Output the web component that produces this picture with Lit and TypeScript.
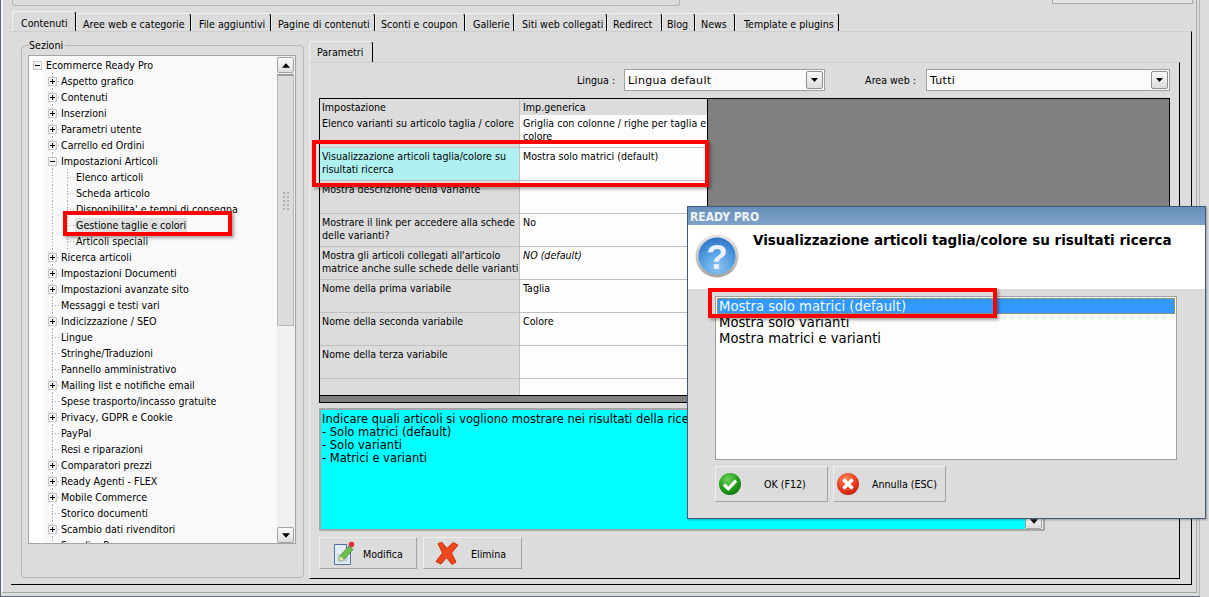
import { LitElement, html, css, svg } from "lit";
import { customElement } from "lit/decorators.js";

type Node = { t: string; l: number; e?: "+" | "-"; hl?: boolean };
const tree: Node[] = [
  { t: "Ecommerce Ready Pro", l: 0, e: "-" },
  { t: "Aspetto grafico", l: 1, e: "+" },
  { t: "Contenuti", l: 1, e: "+" },
  { t: "Inserzioni", l: 1, e: "+" },
  { t: "Parametri utente", l: 1, e: "+" },
  { t: "Carrello ed Ordini", l: 1, e: "+" },
  { t: "Impostazioni Articoli", l: 1, e: "-" },
  { t: "Elenco articoli", l: 2 },
  { t: "Scheda articolo", l: 2 },
  { t: "Disponibilita' e tempi di consegna", l: 2 },
  { t: "Gestione taglie e colori", l: 2, hl: true },
  { t: "Articoli speciali", l: 2 },
  { t: "Ricerca articoli", l: 1, e: "+" },
  { t: "Impostazioni Documenti", l: 1, e: "+" },
  { t: "Impostazioni avanzate sito", l: 1, e: "+" },
  { t: "Messaggi e testi vari", l: 1 },
  { t: "Indicizzazione / SEO", l: 1, e: "+" },
  { t: "Lingue", l: 1 },
  { t: "Stringhe/Traduzioni", l: 1 },
  { t: "Pannello amministrativo", l: 1 },
  { t: "Mailing list e notifiche email", l: 1, e: "+" },
  { t: "Spese trasporto/incasso gratuite", l: 1 },
  { t: "Privacy, GDPR e Cookie", l: 1, e: "+" },
  { t: "PayPal", l: 1 },
  { t: "Resi e riparazioni", l: 1 },
  { t: "Comparatori prezzi", l: 1, e: "+" },
  { t: "Ready Agenti - FLEX", l: 1, e: "+" },
  { t: "Mobile Commerce", l: 1, e: "+" },
  { t: "Storico documenti", l: 1 },
  { t: "Scambio dati rivenditori", l: 1, e: "+" },
  { t: "Supplier Pro", l: 1 },
];

const tabs: [string, number, number][] = [
  ["Contenuti", 64, 8], ["Aree web e categorie", 115, 6], ["File aggiuntivi", 80, 7], ["Pagine di contenuti", 104, 6],
  ["Sconti e coupon", 90, 5], ["Gallerie", 49, 7], ["Siti web collegati", 93, 7], ["Redirect", 55, 5],
  ["Blog", 33, 4], ["News", 40, 5], ["Template e plugins", 104, 8],
];

const rows: [string, string, boolean?, boolean?][] = [
  ["Elenco varianti su articolo taglia / colore", "Griglia con colonne / righe per taglia e colore"],
  ["Visualizzazione articoli taglia/colore su risultati ricerca", "Mostra solo matrici (default)", true],
  ["Mostra descrizione della variante", ""],
  ["Mostrare il link per accedere alla schede delle varianti?", "No"],
  ["Mostra gli articoli collegati all'articolo matrice anche sulle schede delle varianti", "NO (default)", false, true],
  ["Nome della prima variabile", "Taglia"],
  ["Nome della seconda variabile", "Colore"],
  ["Nome della terza variabile", ""],
  ["", ""],
];

const arrowDown = svg`<svg width="8" height="5" viewBox="0 0 9 5"><path d="M0 0h9L4.500 5z" fill="#000"/></svg>`;
const arrowUp = svg`<svg width="8" height="5" viewBox="0 0 9 5"><path d="M0 5h9L4.500 0z" fill="#000"/></svg>`;
const comboArrow = svg`<svg width="7" height="4" viewBox="0 0 7 4"><path d="M0 0h7L3.500 4z" fill="#000"/></svg>`;

const expander = (e: string) => svg`<svg class="exp" width="9" height="9" viewBox="0 0 9 9">
  <rect x=".5" y=".5" width="8" height="8" fill="#f4f4f4" stroke="#c8c8c8"/>
  <path d="M2 4.500h5${e === "+" ? "M4.500 2v5" : ""}" stroke="#000" fill="none"/></svg>`;

const okIcon = svg`<svg width="24" height="24" viewBox="0 0 24 24">
  <defs><radialGradient id="g" cx=".4" cy=".3" r=".8"><stop offset="0" stop-color="#6fd05a"/><stop offset=".6" stop-color="#1f9a1c"/><stop offset="1" stop-color="#0c6a10"/></radialGradient></defs>
  <circle cx="12" cy="12" r="11" fill="url(#g)"/>
  <path d="M6 12.500l4.300 4.300L18 8.600" fill="none" stroke="#fff" stroke-width="3.200"/></svg>`;
const noIcon = svg`<svg width="24" height="24" viewBox="0 0 24 24">
  <defs><radialGradient id="r" cx=".4" cy=".3" r=".8"><stop offset="0" stop-color="#ff8a60"/><stop offset=".6" stop-color="#e8391a"/><stop offset="1" stop-color="#b01e0c"/></radialGradient></defs>
  <circle cx="12" cy="12" r="11" fill="url(#r)"/>
  <path d="M7.500 7.500l9 9M16.500 7.500l-9 9" fill="none" stroke="#fff" stroke-width="3.400"/></svg>`;
const editIcon = svg`<svg width="22" height="24" viewBox="0 0 22 24">
  <path d="M1.500 3.500h12l4 4v16h-16z" fill="#e4ecf6" stroke="#4f6fa5"/>
  <path d="M4 13h11v8H4z" fill="#c8d4e0"/>
  <path d="M13.500 3.500v4h4" fill="#fff" stroke="#4f6fa5"/>
  <path d="M6 20l1-5L16 5l4 3.500L11 18.500z" fill="#6cc04a" stroke="#3e8a2c" stroke-width=".8"/>
  <path d="M6 20l1-5 4 3.500z" fill="#f4e4b0"/>
  <circle cx="18.500" cy="3.500" r="2.800" fill="#e0303a"/></svg>`;
const delIcon = svg`<svg width="24" height="23" viewBox="0 0 24 23">
  <path d="M3 1.500L7 .5l5 6 6-6 5 2.500-6.500 8L21 20l-4 2.500-5.500-7L6 22l-5-2.500 6.500-8.500z" fill="#f0471c" stroke="#c42e0a" stroke-linejoin="round"/></svg>`;
const helpIcon = svg`<svg width="44" height="44" viewBox="0 0 44 44">
  <defs>
    <linearGradient id="ring" x1="0" y1="0" x2="0" y2="1"><stop offset="0" stop-color="#e8e8e8"/><stop offset="1" stop-color="#a4a4a4"/></linearGradient>
    <radialGradient id="orb" cx=".5" cy=".8" r=".85"><stop offset="0" stop-color="#8cc6f5"/><stop offset=".6" stop-color="#4a96e0"/><stop offset="1" stop-color="#2a6cc0"/></radialGradient>
  </defs>
  <circle cx="22" cy="22" r="21.500" fill="url(#ring)"/>
  <circle cx="22" cy="22" r="18.500" fill="url(#orb)"/>
  <text x="22" y="35" text-anchor="middle" font-family="Liberation Sans" font-weight="700" font-size="35" fill="#eef1fa">?</text></svg>`;

@customElement("app-root")
export class AppRoot extends LitElement {
  static styles = css`
    :host { display: block; width: 1209px; height: 597px; overflow: hidden; position: relative; background: #dcdcdc;
      font: 10.600px/13px "DejaVu Sans Condensed", "DejaVu Sans", sans-serif; color: #000; }
    * { box-sizing: border-box; }
    .window { width: 1200px; height: 597px; display: flex; border-left: 1px solid #5f6d7c; border-right: 1px solid #aeb4ba; border-bottom: 1px solid #5f6d7c; }
    .frame { width: 1196px; height: 593px; border-left: 2px solid #f4f4f4; border-right: 1px solid #a9a9a9; border-bottom: 1px solid #a9a9a9; padding-left: 8px; display: flex; flex-direction: column; }
    .top { height: 13px; display: flex; justify-content: space-between; padding-left: 1px; }
    .top-a { width: 668px; height: 6px; border: 1px solid #b4b4b4; border-top: 0; border-radius: 0 0 3px 3px; }
    .top-b { width: 141px; height: 4px; border: 1px solid #a8a8a8; border-top: 0; margin-right: 3px; background: #e4e4e4; }
    .tabs { height: 18px; display: flex; padding-left: 1px; }
    .tab { height: 18px; padding-top: 4px; border-top: 1px solid #efefef; border-left: 1px solid #efefef; border-right: 1px solid #000; border-radius: 3px 3px 0 0; white-space: nowrap; }
    .tab.on { height: 20px; margin-top: -2px; padding-top: 5px; }
    .panel { width: 1181px; height: 554px; border-top: 1px solid #cfcfcf; border-right: 1px solid #000; border-bottom: 1px solid #000; padding-left: 10px; display: flex; gap: 5px; align-items: flex-start; }
    .group { width: 283px; height: 533px; margin-top: 13px; border: 1px solid #b6b6b6; border-radius: 4px; padding: 0 7px 0 6px; }
    .legend { display: block; width: max-content; margin: -7px 0 3px 1px; padding: 0 2px 0 0; height: 13px; background: #dcdcdc; }
    .tree { width: 268px; height: 489px; border: 1px solid #a4a4a4; display: flex; background: #fff; }
    .list { width: 248px; overflow: hidden; padding: 1px 0 0 1px; background: linear-gradient(90deg, #fff 15px, #f9f9f9 15px); }
    .row { height: 16px; display: flex; align-items: stretch; white-space: nowrap; }
    .cell { width: 15px; flex: none; position: relative; display: flex; align-items: center; justify-content: center; background-repeat: no-repeat; }
    .cell.v { background-image: repeating-linear-gradient(180deg, #a8a8a8 0 1px, transparent 1px 3px); background-size: 1px 100%; background-position: 7px 0; }
    .cell.c { background-image: repeating-linear-gradient(90deg, #a8a8a8 0 1px, transparent 1px 3px), repeating-linear-gradient(180deg, #a8a8a8 0 1px, transparent 1px 3px); background-size: 8px 1px, 1px 100%; background-position: 7px 8px, 7px 0; }
    .label { padding: 1px 1px 0; height: 15px; margin-top: 1px; line-height: 13px; }
    .label.hl { background: #e0e0e0; }
    .sb { width: 18px; background: #f0f0f0; padding: 1px 1px 0 0; display: flex; flex-direction: column; }
    .sb-btn { width: 17px; height: 16px; flex: none; border: 1px solid #a3a3a3; border-radius: 2px; background: linear-gradient(#fafafa, #dedede); display: flex; align-items: center; justify-content: center; }
    .thumb { width: 17px; height: 252px; flex: none; margin-top: 1px; border: 1px solid #b8b8b8; border-top: 2px solid #9c9c9c; background: #dcdcdc; display: flex; align-items: center; justify-content: center; }
    .grip { width: 7px; height: 20px; background-image: radial-gradient(circle, #b0b0b0 0 1px, transparent 1px); background-size: 4px 4px; }
    .sb-fill { flex: 1; }
    .pane { width: 871px; height: 538px; margin-top: 9px; display: flex; flex-direction: column; }
    .subtab { width: 64px; height: 21px; padding: 4px 0 0 7px; border-top: 1px solid #efefef; border-left: 1px solid #efefef; border-right: 1px solid #000; border-radius: 3px 3px 0 0; }
    .sub { flex: 1; border-top: 1px solid #cfcfcf; border-left: 1px solid #ececec; border-right: 1px solid #000; border-bottom: 1px solid #000; padding: 6px 9px 0 9px; display: flex; flex-direction: column; }
    .bar { height: 22px; display: flex; align-items: center; justify-content: flex-end; }
    .bar-label { margin-right: 9px; }
    .bar-label.second { margin-left: 40px; margin-right: 10px; }
    .combo { height: 22px; border: 1px solid #a0a0a0; background: #fbfbfb; display: flex; align-items: center; justify-content: space-between; padding: 0 1px 0 3px; font: 11px/13px "DejaVu Sans", sans-serif; letter-spacing: .3px; }
    .combo.a { width: 201px; }
    .combo.b { width: 244px; }
    .combo-btn { width: 17px; height: 18px; border: 1px solid #8e8e8e; border-radius: 2px; background: linear-gradient(#fafafa, #dcdcdc); display: flex; align-items: center; justify-content: center; }
    .grid { margin-top: 7px; height: 305px; width: 851px; border: 1px solid #000; background: #808080; overflow: hidden; display: flex; flex-direction: column; }
    .t { width: 388px; height: 296px; overflow: hidden; border-right: 1px solid #000; flex: none; }
    .tr { display: grid; grid-template-columns: 200px 187px; height: 33px; border-bottom: 1px solid #c0c0c0; }
    .tr.h { height: 16px; border-bottom: 0; }
    .td { padding: 2px 0 0 2px; overflow: hidden; border-right: 1px solid #c0c0c0; background: #dcdcdc; }
    .td.v { background: #fdfdfd; border-right: 0; padding-left: 3px; }
    .tr.h .td { padding-top: 2px; background: #dcdcdc; }
    .tr.h .td.v { border-right: 0; }
    .tr.sel .td:first-child { background: #aff0f0; }
    .it { font-style: italic; }
    .band { height: 7px; border-top: 1px solid #000; flex: none; }
    .area { margin-top: 5px; width: 726px; height: 123px; border: 2px solid #a6a6a6; background: #0ff; display: flex; font: 11.500px/13px "DejaVu Sans", sans-serif; }
    .area-text { flex: 1; padding: 3px 1px; white-space: pre; overflow: hidden; }
    .area-sb { width: 18px; display: flex; flex-direction: column; justify-content: flex-end; background: #f0f0f0; }
    .actions { margin-top: 6px; display: flex; gap: 6px; }
    .btn { height: 32px; background: #dcdcdc; border: 1px solid #efefef; border-right-color: #a2a2a2; border-bottom-color: #a2a2a2; display: flex; align-items: center; }
    .b1 { width: 98px; padding-left: 13px; }
    .b1 span { margin: 2px 0 0 8px; }
    .b2 { width: 99px; padding-left: 11px; }
    .b2 span { margin: 2px 0 0 12px; }
    .dialog { position: absolute; left: 687px; top: 206px; width: 519px; height: 313px; border: 1px solid #3d5a78; background: #dcdcdc; box-shadow: 1px 1px 2px rgba(0,0,0,.3); display: flex; flex-direction: column; }
    .d-title { height: 18px; background: linear-gradient(#6890ba, #7fa3c9); color: #eef3f8; font: 700 12px/13px "DejaVu Sans Condensed", sans-serif; padding: 4px 0 0 2px; }
    .d-head { height: 64px; background: #fff; display: flex; padding: 9px 0 0 7px; }
    .d-q { font: 700 13.500px/15px "DejaVu Sans", sans-serif; margin-left: 14px; margin-top: -1px; white-space: nowrap; }
    .d-list { margin: 7px 0 0 27px; width: 462px; height: 164px; border: 1px solid #9e9e9e; background: #fdfdfd; padding: 1px; font: 13.200px/16px "DejaVu Sans", sans-serif; }
    .opt { height: 16px; padding: 1px 2px 0; white-space: nowrap; }
    .opt.on { background: #39f; color: #f2f8ff; outline: 1px dotted #e08a2a; outline-offset: -1px; }
    .d-btns { margin: 6px 0 0 27px; display: flex; gap: 5px; }
    .d-btn { width: 113px; height: 36px; background: #dcdcdc; border: 1px solid #efefef; border-right-color: #a2a2a2; border-bottom-color: #a2a2a2; display: flex; align-items: center; padding-left: 2px; }
    .d-btn span { margin-left: 22px; }
    .d-btn.n span { margin-left: 12px; }
    .mark { position: absolute; border: 4px solid #f00; box-shadow: 2px 2px 3px rgba(0,0,0,.35); }
    .m1 { left: 63px; top: 211px; width: 169px; height: 25px; }
    .m2 { left: 312px; top: 140px; width: 397px; height: 47px; }
    .m3 { left: 708px; top: 288px; width: 289px; height: 30px; }
  `;

  private node(n: Node) {
    const exp = n.e ? expander(n.e) : "";
    let cells;
    if (n.l === 0) cells = html`<div class="cell">${exp}</div>`;
    else if (n.l === 1) cells = html`<div class="cell"></div><div class="cell c">${exp}</div>`;
    else cells = html`<div class="cell"></div><div class="cell v"></div><div class="cell c"></div>`;
    return html`<div class="row">${cells}<div class="label ${n.hl ? "hl" : ""}">${n.t}</div></div>`;
  }

  render() {
    return html`
      <div class="window"><div class="frame">
        <div class="top"><div class="top-a"></div><div class="top-b"></div></div>
        <div class="tabs">
          ${tabs.map(([t, w, p], i) => html`<div class="tab ${i === 0 ? "on" : ""}" style="width:${w}px;padding-left:${p}px">${t}</div>`)}
        </div>
        <div class="panel">
          <div class="group">
            <span class="legend">Sezioni</span>
            <div class="tree">
              <div class="list">${tree.map((n) => this.node(n))}</div>
              <div class="sb">
                <div class="sb-btn">${arrowUp}</div>
                <div class="thumb"><div class="grip"></div></div>
                <div class="sb-fill"></div>
                <div class="sb-btn">${arrowDown}</div>
              </div>
            </div>
          </div>
          <div class="pane">
            <div class="subtab">Parametri</div>
            <div class="sub">
              <div class="bar">
                <span class="bar-label">Lingua :</span>
                <div class="combo a"><span>Lingua default</span><div class="combo-btn">${comboArrow}</div></div>
                <span class="bar-label second">Area web :</span>
                <div class="combo b"><span>Tutti</span><div class="combo-btn">${comboArrow}</div></div>
              </div>
              <div class="grid">
                <div class="t">
                  <div class="tr h"><div class="td">Impostazione</div><div class="td v">Imp.generica</div></div>
                  ${rows.map(([a, b, sel, it]) => html`<div class="tr ${sel ? "sel" : ""}"><div class="td">${a}</div><div class="td v ${it ? "it" : ""}">${b}</div></div>`)}
                </div>
                <div class="band"></div>
              </div>
              <div class="area">
                <div class="area-text">Indicare quali articoli si vogliono mostrare nei risultati della ricerca
- Solo matrici (default)
- Solo varianti
- Matrici e varianti</div>
                <div class="area-sb"><div class="sb-btn">${arrowDown}</div></div>
              </div>
              <div class="actions">
                <div class="btn b1">${editIcon}<span>Modifica</span></div>
                <div class="btn b2">${delIcon}<span>Elimina</span></div>
              </div>
            </div>
          </div>
        </div>
      </div></div>
      <div class="mark m1"></div>
      <div class="mark m2"></div>
      <div class="dialog">
        <div class="d-title">READY PRO</div>
        <div class="d-head">${helpIcon}<div class="d-q">Visualizzazione articoli taglia/colore su risultati ricerca</div></div>
        <div class="d-list">
          <div class="opt on">Mostra solo matrici (default)</div>
          <div class="opt">Mostra solo varianti</div>
          <div class="opt">Mostra matrici e varianti</div>
        </div>
        <div class="d-btns">
          <div class="d-btn">${okIcon}<span>OK (F12)</span></div>
          <div class="d-btn n">${noIcon}<span>Annulla (ESC)</span></div>
        </div>
      </div>
      <div class="mark m3"></div>
    `;
  }
}
